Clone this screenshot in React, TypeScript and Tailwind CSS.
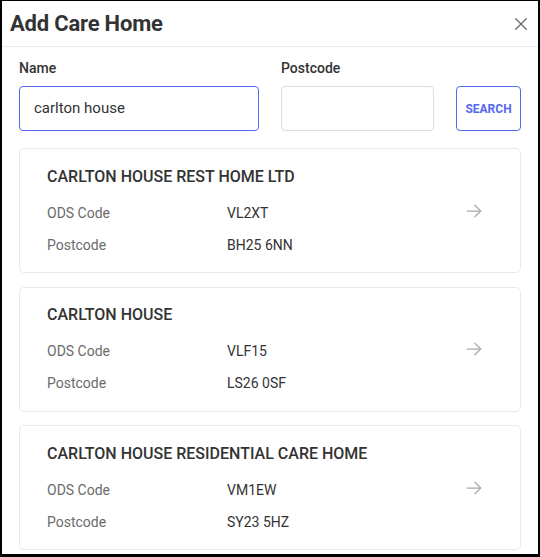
import React from "react";

const rows = [
  { name: "CARLTON HOUSE REST HOME LTD", ods: "VL2XT", pc: "BH25 6NN" },
  { name: "CARLTON HOUSE", ods: "VLF15", pc: "LS26 0SF" },
  { name: "CARLTON HOUSE RESIDENTIAL CARE HOME", ods: "VM1EW", pc: "SY23 5HZ" },
];

function Arrow() {
  return (
    <svg width="20" height="20" viewBox="0 0 24 24" fill="none" stroke="#a8a8a8" strokeWidth="1.5" strokeLinecap="round" strokeLinejoin="round">
      <path d="M4 12h16" />
      <path d="M13 5l7 7-7 7" />
    </svg>
  );
}

export default function App() {
  return (
    <div
      className="w-[540px] h-[557px] bg-white border-black border-l-2 border-r-2 border-t border-b-[3px] overflow-hidden flex flex-col"
      style={{ fontFamily: "Roboto, 'Liberation Sans', sans-serif" }}
    >
      <div className="h-[46px] flex items-center justify-between pl-[8px] pr-[8px] border-b border-[#e5eaf2] shrink-0">
        <h1 className="text-[22px] font-bold text-[#333333] tracking-[-0.2px]">Add Care Home</h1>
        <svg width="18" height="18" viewBox="0 0 24 24" fill="none" stroke="#6b6b6b" strokeWidth="1.8" strokeLinecap="round">
          <path d="M5 5l14 14M19 5L5 19" />
        </svg>
      </div>
      <div className="px-[17px] pt-[12px] flex flex-col">
        <div className="flex items-end">
          <div className="flex flex-col w-[240px]">
            <label className="text-[14px] font-medium text-[#333333] leading-[18px] mb-[9px]">Name</label>
            <div className="h-[45px] border border-[#5468f0] rounded-[4px] flex items-center px-[14px] text-[15px] text-[#333333]">
              carlton house
            </div>
          </div>
          <div className="flex flex-col w-[153px] ml-[22px]">
            <label className="text-[14px] font-medium text-[#333333] leading-[18px] mb-[9px]">Postcode</label>
            <div className="h-[45px] border border-[#dcdcdc] rounded-[4px]" />
          </div>
          <button className="ml-[22px] w-[65px] h-[45px] border border-[#5468f0] rounded-[4px] text-[12px] font-bold text-[#5468f0] flex items-center justify-center">
            SEARCH
          </button>
        </div>
        <div className="flex flex-col gap-[13.5px] mt-[17px]">
          {rows.map((r) => (
            <div
              key={r.name}
              className="h-[125px] border border-[#e5eaf2] rounded-[5px] flex items-center pl-[27px] pr-[36px]"
            >
              <div className="flex-1 flex flex-col">
                <div className="text-[16px] font-medium text-[#333333] leading-[20px]">{r.name}</div>
                <div className="flex mt-[16px] text-[14px] leading-[20px]">
                  <span className="w-[180px] text-[#6b6b6b]">ODS Code</span>
                  <span className="text-[#333333]">{r.ods}</span>
                </div>
                <div className="flex mt-[12px] text-[14px] leading-[20px]">
                  <span className="w-[180px] text-[#6b6b6b]">Postcode</span>
                  <span className="text-[#333333]">{r.pc}</span>
                </div>
              </div>
              <Arrow />
            </div>
          ))}
        </div>
      </div>
    </div>
  );
}
